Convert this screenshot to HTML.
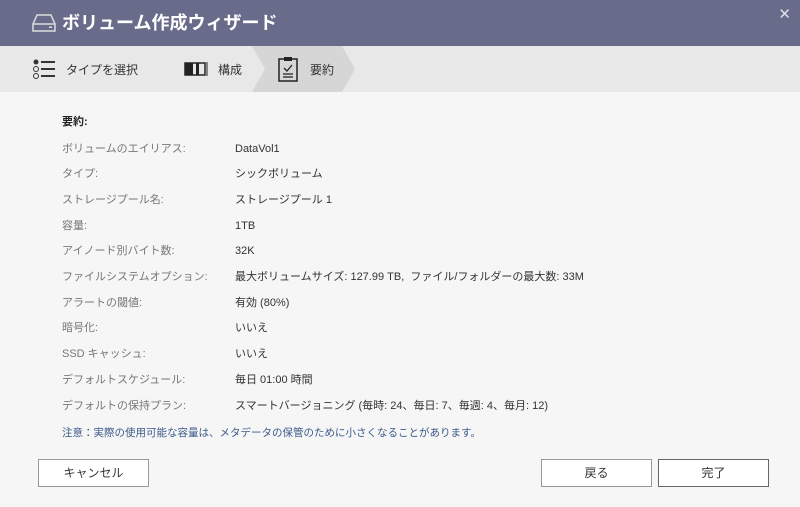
<!DOCTYPE html>
<html><head><meta charset="utf-8"><style>
body{margin:0;width:800px;height:507px;background:#f6f6f6;font-family:"Liberation Sans","Noto Sans CJK JP",sans-serif;overflow:hidden;position:relative}
.hd{position:absolute;left:0;top:0;width:800px;height:46px;background:#686b8a;color:#fff}
.hd .t{position:absolute;left:62px;top:11px;font-size:18px;font-weight:bold;line-height:24px}
.hd .x{position:absolute;right:9px;top:5px;font-size:15px;color:#e0e0e8}
.st{position:absolute;left:0;top:46px;width:800px;height:46px;background:#e8e8e8;font-size:12px;color:#333}
.st span{position:absolute;top:16px;line-height:16px}
.r{position:absolute;font-size:11px;line-height:14px;color:#333;white-space:nowrap}
.l{color:#777;left:62px}
.v{left:235px}
.btn{position:absolute;top:459px;height:26px;border:1px solid #999;background:#fff;font-size:12px;color:#333;text-align:center;line-height:26px}
</style></head><body>
<div class="hd">
<svg style="position:absolute;left:32px;top:13px" width="24" height="20" viewBox="0 0 24 20"><path d="M5 2h14l4 9v7H1v-7z M1 11h22" fill="none" stroke="#ddd" stroke-width="1.5"/><rect x="17" y="13.5" width="3" height="1.5" fill="#ddd"/></svg>
<div class="t">ボリューム作成ウィザード</div><div class="x">✕</div></div>
<div class="st">
<svg style="position:absolute;left:252px;top:0" width="105" height="46"><polygon points="0,0 90,0 103,23 90,46 0,46 13,23" fill="#d6d6d6"/></svg>
<svg style="position:absolute;left:32px;top:12px" width="24" height="22"><circle cx="4" cy="4" r="2.5" fill="#333"/><circle cx="4" cy="11" r="2.5" fill="none" stroke="#333"/><circle cx="4" cy="18" r="2.5" fill="none" stroke="#333"/><path d="M9 4h14M9 11h14M9 18h14" stroke="#333" stroke-width="2"/></svg>
<span style="left:66px">タイプを選択</span>
<svg style="position:absolute;left:184px;top:16px" width="24" height="14"><rect x="1" y="1" width="20" height="12" fill="none" stroke="#222" stroke-width="1.5"/><rect x="1" y="1" width="8" height="12" fill="#222"/><rect x="12" y="1" width="3" height="12" fill="#222"/><path d="M23 0v14" stroke="#222"/></svg>
<span style="left:218px">構成</span>
<svg style="position:absolute;left:278px;top:10px" width="20" height="26"><rect x="1" y="3" width="18" height="22" fill="none" stroke="#222" stroke-width="1.5"/><rect x="6" y="1" width="8" height="4" fill="#222"/><path d="M6 12l3 3 5-6M5 18h10M5 21h10" stroke="#222" stroke-width="1.3" fill="none"/></svg>
<span style="left:310px">要約</span>
</div>
<div class="r" style="left:62px;top:115px;font-weight:bold;color:#222">要約:</div>
<div class="r l" style="top:142px">ボリュームのエイリアス:</div><div class="r v" style="top:142px">DataVol1</div>
<div class="r l" style="top:167px">タイプ:</div><div class="r v" style="top:167px">シックボリューム</div>
<div class="r l" style="top:193px">ストレージプール名:</div><div class="r v" style="top:193px">ストレージプール 1</div>
<div class="r l" style="top:219px">容量:</div><div class="r v" style="top:219px">1TB</div>
<div class="r l" style="top:244px">アイノード別バイト数:</div><div class="r v" style="top:244px">32K</div>
<div class="r l" style="top:270px">ファイルシステムオプション:</div><div class="r v" style="top:270px">最大ボリュームサイズ: 127.99 TB,&nbsp; ファイル/フォルダーの最大数: 33M</div>
<div class="r l" style="top:296px">アラートの閾値:</div><div class="r v" style="top:296px">有効 (80%)</div>
<div class="r l" style="top:321px">暗号化:</div><div class="r v" style="top:321px">いいえ</div>
<div class="r l" style="top:347px">SSD キャッシュ:</div><div class="r v" style="top:347px">いいえ</div>
<div class="r l" style="top:373px">デフォルトスケジュール:</div><div class="r v" style="top:373px">毎日 01:00 時間</div>
<div class="r l" style="top:399px">デフォルトの保持プラン:</div><div class="r v" style="top:399px">スマートバージョニング (毎時: 24、毎日: 7、毎週: 4、毎月: 12)</div>
<div class="r" style="left:62px;top:426px;color:#3b5a8a;font-size:10.5px">注意：実際の使用可能な容量は、メタデータの保管のために小さくなることがあります。</div>
<div class="btn" style="left:38px;width:109px">キャンセル</div>
<div class="btn" style="left:541px;width:109px">戻る</div>
<div class="btn" style="left:658px;width:109px;border-color:#666">完了</div>
</body></html>
